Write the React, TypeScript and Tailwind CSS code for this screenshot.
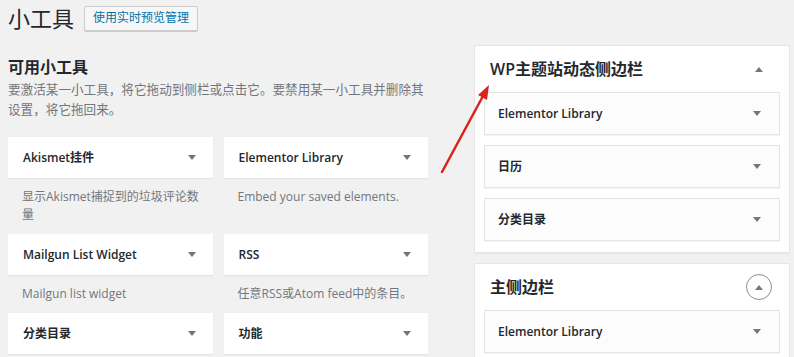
import React from 'react';

const font = { fontFamily: '"Open Sans", "Noto Sans CJK SC", sans-serif' };

function Caret({ up }: { up?: boolean }) {
  return (
    <svg width="8" height="5" viewBox="0 0 8 5" className="shrink-0">
      <path d={up ? 'M0 5L4 0L8 5Z' : 'M0 0L8 0L4 5Z'} fill="#72777c" />
    </svg>
  );
}

const widgets = [
  { name: 'Akismet挂件', desc: '显示Akismet捕捉到的垃圾评论数量' },
  { name: 'Elementor Library', desc: 'Embed your saved elements.' },
  { name: 'Mailgun List Widget', desc: 'Mailgun list widget' },
  { name: 'RSS', desc: '任意RSS或Atom feed中的条目。' },
  { name: '分类目录', desc: '' },
  { name: '功能', desc: '' },
];

function SideCard({ name }: { name: string }) {
  return (
    <div className="h-[43px] bg-[#fcfcfc] border border-[#e5e5e5] shadow-[0_1px_1px_rgba(0,0,0,0.04)] flex items-center justify-between pl-[13px] pr-[18px]">
      <span className="text-[12px] font-semibold text-[#23282d]">{name}</span>
      <Caret />
    </div>
  );
}

export default function App() {
  return (
    <div className="relative w-[794px] h-[357px] overflow-hidden bg-[#f1f1f1] flex pl-2" style={font}>
      {/* left column */}
      <div className="w-[420px]">
        <div className="flex items-center gap-[10px] pt-[5px] h-[31px]">
          <h1 className="text-[22px] leading-[26px] text-[#23282d]">小工具</h1>
          <button className="h-[25px] px-[8px] border border-[#ccc] bg-[#f7f7f7] rounded-[2px] text-[12px] text-[#0073aa] shadow-[0_1px_0_#ccc]">
            使用实时预览管理
          </button>
        </div>
        <h2 className="mt-[24px] text-[16px] leading-[24px] font-bold text-[#23282d]">可用小工具</h2>
        <p className="mt-[1px] text-[12.6px] leading-[20px] text-[#72777c] whitespace-nowrap">
          要激活某一小工具，将它拖动到侧栏或点击它。要禁用某一小工具并删除其
          <br />
          设置，将它拖回来。
        </p>
        <div className="mt-[17px] grid grid-cols-2 gap-x-[11px]">
          {widgets.map((w) => (
            <div key={w.name} className="flex flex-col">
              <div className="h-[41px] bg-white shadow-[0_1px_1px_rgba(0,0,0,0.06)] flex items-center justify-between pl-[15px] pr-[17px]">
                <span className="text-[12px] font-semibold text-[#23282d]">{w.name}</span>
                <Caret />
              </div>
              {w.desc && (
                <div className="pl-[14px] pr-[4px] pt-[10px] pb-[10px] text-[12px] leading-[18px] text-[#72777c]">
                  {w.desc}
                </div>
              )}
            </div>
          ))}
        </div>
      </div>

      {/* right column */}
      <div className="ml-[46px] w-[316px] pt-[45px]">
        <div className="bg-white border border-[#e5e5e5] shadow-[0_1px_1px_rgba(0,0,0,0.04)] px-[9px] pb-[11px]">
          <div className="h-[46px] flex items-center justify-between pl-[6px] pr-[17px]">
            <span className="text-[16px] font-semibold text-[#23282d]">WP主题站动态侧边栏</span>
            <Caret up />
          </div>
          <div className="flex flex-col gap-[10px]">
            <SideCard name="Elementor Library" />
            <SideCard name="日历" />
            <SideCard name="分类目录" />
          </div>
        </div>
        <div className="mt-[10px] bg-white border border-[#e5e5e5] shadow-[0_1px_1px_rgba(0,0,0,0.04)] px-[9px] pb-[10px]">
          <div className="h-[46px] flex items-center justify-between pl-[6px] pr-[8px]">
            <span className="text-[16px] font-semibold text-[#23282d]">主侧边栏</span>
            <div className="w-[26px] h-[26px] rounded-full border-[1.5px] border-[#8c8f94] flex items-center justify-center">
              <Caret up />
            </div>
          </div>
          <SideCard name="Elementor Library" />
        </div>
      </div>

      {/* red arrow annotation */}
      <svg className="absolute left-0 top-0 pointer-events-none" width="794" height="357">
        <line x1="442" y1="172" x2="483" y2="96" stroke="#d8241c" strokeWidth="2.5" strokeLinecap="round" />
        <path d="M489 85L487 100L478 95Z" fill="#d8241c" />
      </svg>
    </div>
  );
}
